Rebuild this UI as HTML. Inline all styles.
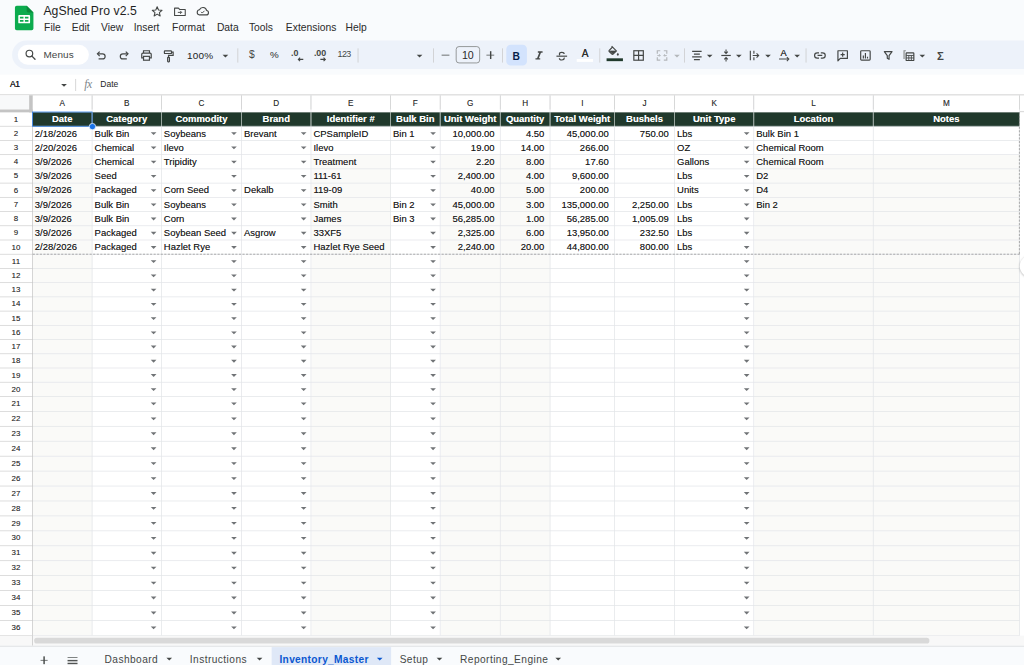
<!DOCTYPE html>
<html><head><meta charset="utf-8"><title>AgShed Pro v2.5 - Google Sheets</title>
<style>
html,body{margin:0;padding:0;overflow:hidden;}
body{position:relative;width:1024px;height:665px;overflow:hidden;background:#f9fbfd;font-family:"Liberation Sans",sans-serif;}
#root{position:absolute;left:0;top:0;width:1440px;height:935px;transform:scale(0.711111);transform-origin:0 0;overflow:hidden;background:#f9fbfd;}
.abs{position:absolute;}
.t{position:absolute;white-space:nowrap;color:#1f1f1f;}
.c20{width:20px;text-align:center;}
.menu{position:absolute;top:27.5px;font-size:14.5px;line-height:20px;color:#2a2a2a;white-space:nowrap;}
.ic{position:absolute;overflow:visible;}
.sep{position:absolute;top:68px;width:1px;height:20px;background:#c7c7c7;}
.car{position:absolute;width:0;height:0;border-left:4px solid transparent;border-right:4px solid transparent;border-top:4.5px solid #444746;}
.cell{position:absolute;font-size:13.333px;color:#1c1c1c;white-space:nowrap;overflow:hidden;box-sizing:border-box;padding:0 3px;height:19px;line-height:20.300px;text-shadow:0 0 0.7px rgba(28,28,28,0.55);}
.cell.r{text-align:right;padding-right:7.5px;}
.hd{position:absolute;font-size:13.333px;font-weight:bold;color:#fff;text-align:center;white-space:nowrap;overflow:hidden;height:19px;line-height:19.400px;text-shadow:0 0 0.7px rgba(255,255,255,0.6);}
.ch{position:absolute;top:135.200px;height:19px;line-height:20px;font-size:11.5px;color:#333;text-align:center;text-shadow:0 0 0.6px rgba(50,50,50,0.5);}
.rh{position:absolute;left:0;width:45px;font-size:11.2px;color:#333;text-align:center;text-shadow:0 0 0.6px rgba(50,50,50,0.5);}
.dd{position:absolute;width:0;height:0;border-left:4px solid transparent;border-right:4px solid transparent;border-top:4px solid #707376;}
.tab{position:absolute;top:920.300px;font-size:14.3px;color:#444746;white-space:nowrap;letter-spacing:0.6px;}
.hl{position:absolute;height:1px;}
.vl{position:absolute;width:1px;}
</style></head><body><div id="root">

<svg class="ic" style="left:21px;top:8px" width="26" height="34.500" viewBox="0 0 26 34.500">
<path d="M2.500 0H16.500L26 9.500V32A2.500 2.500 0 0 1 23.500 34.500H2.500A2.500 2.500 0 0 1 0 32V2.500A2.500 2.500 0 0 1 2.500 0Z" fill="#0cab4e"/>
<path d="M16.500 0L26 9.500H19A2.500 2.500 0 0 1 16.500 7Z" fill="#0a8a3c"/>
<path d="M6 13.200H20A1.300 1.300 0 0 1 21.300 14.500V23.500A1.300 1.300 0 0 1 20 24.800H6A1.300 1.300 0 0 1 4.700 23.500V14.500A1.300 1.300 0 0 1 6 13.200Z M7 15.500V17.900H12V15.500Z M14 15.500V17.900H19V15.500Z M7 20.100V22.500H12V20.100Z M14 20.100V22.500H19V20.100Z" fill="#fff" fill-rule="evenodd"/>
</svg>
<div class="t" style="left:61px;top:2.800px;font-size:17.2px;line-height:24px;letter-spacing:0.1px;color:#1f1f1f">AgShed Pro v2.5</div>
<svg class="ic" style="left:211px;top:5.600px" width="20" height="20" viewBox="0 0 24 24"><path d="M12 4.200l2.300 5.400 5.900.500-4.500 3.900 1.400 5.800L12 16.700l-5.100 3.100 1.400-5.800-4.500-3.900 5.900-.500z" fill="none" stroke="#444746" stroke-width="1.800" stroke-linejoin="round"/></svg>
<svg class="ic" style="left:243px;top:5.600px" width="20" height="20" viewBox="0 0 24 24"><path d="M3 6.500h6.500l2 2.200H21V19H3z" fill="none" stroke="#444746" stroke-width="1.800" stroke-linejoin="round"/><path d="M8.500 13.700h6M12.500 11.200l2.500 2.500-2.500 2.500" fill="none" stroke="#444746" stroke-width="1.600"/></svg>
<svg class="ic" style="left:274.500px;top:5.500px" width="20" height="20" viewBox="0 0 24 24"><path d="M6.500 18h11.500a3.800 3.800 0 0 0 .600-7.550A6.300 6.300 0 0 0 6.600 9.300 4.400 4.400 0 0 0 6.500 18z" fill="none" stroke="#444746" stroke-width="1.900" stroke-linejoin="round"/><path d="M9.300 12.800l2 2 3.800-3.800" fill="none" stroke="#444746" stroke-width="1.600"/></svg>
<div class="menu" style="left:62px">File</div>
<div class="menu" style="left:101px">Edit</div>
<div class="menu" style="left:142px">View</div>
<div class="menu" style="left:188px">Insert</div>
<div class="menu" style="left:242px">Format</div>
<div class="menu" style="left:305px">Data</div>
<div class="menu" style="left:350px">Tools</div>
<div class="menu" style="left:402px">Extensions</div>
<div class="menu" style="left:486px">Help</div>
<div class="abs" style="left:17px;top:57px;width:1440px;height:40px;background:#edf2fa;border-radius:20px 0 0 20px"></div>
<div class="abs" style="left:25px;top:63px;width:100px;height:28px;background:#fff;border-radius:14px"></div>
<svg class="ic" style="left:33px;top:66.500px" width="20" height="20" viewBox="0 0 24 24"><circle cx="10" cy="10" r="5.600" fill="none" stroke="#444746" stroke-width="2"/><path d="M14.300 14.300l5.200 5.200" stroke="#444746" stroke-width="2.200" stroke-linecap="round"/></svg>
<div class="t" style="left:61px;top:66.600px;font-size:14px;line-height:18px;color:#444746;letter-spacing:0.15px">Menus</div>
<svg class="ic" style="left:131.5px;top:67.2px" width="20" height="20" viewBox="0 0 24 24"><path d="M6.500 10.500h8.200a4.300 4.300 0 0 1 0 8.600H8" fill="none" stroke="#444746" stroke-width="2"/><path d="M9.800 6.800L6 10.500l3.800 3.700" fill="none" stroke="#444746" stroke-width="2"/></svg>
<svg class="ic" style="left:164.8px;top:67.2px" width="20" height="20" viewBox="0 0 24 24"><path d="M17.500 10.500H9.300a4.300 4.300 0 0 0 0 8.600H16" fill="none" stroke="#444746" stroke-width="2"/><path d="M14.200 6.800l3.800 3.700-3.800 3.700" fill="none" stroke="#444746" stroke-width="2"/></svg>
<svg class="ic" style="left:196.0px;top:68.0px" width="20" height="20" viewBox="0 0 24 24"><path d="M7 8V4h10v4M7 16H4V9.800A1.800 1.800 0 0 1 5.800 8h12.400A1.800 1.800 0 0 1 20 9.800V16h-3" fill="none" stroke="#444746" stroke-width="2"/><rect x="7" y="13.500" width="10" height="6.500" fill="none" stroke="#444746" stroke-width="2"/></svg>
<svg class="ic" style="left:227.0px;top:68.5px" width="20" height="20" viewBox="0 0 24 24"><rect x="5" y="3" width="12" height="4.500" rx="1" fill="none" stroke="#444746" stroke-width="2"/><path d="M17 5.200h2.800v5.300H12v3.500" fill="none" stroke="#444746" stroke-width="2"/><rect x="10.500" y="14" width="3" height="7.500" rx="0.800" fill="none" stroke="#444746" stroke-width="2"/></svg>
<div class="t" style="left:263px;top:69px;font-size:14px;line-height:18px;color:#222;letter-spacing:0.3px">100%</div>
<div class="car" style="left:313.1px;top:76.5px;border-top-color:#444746"></div>
<div class="sep" style="left:333.5px"></div>
<div class="t" style="left:334.1px;top:65.9px;width:40px;text-align:center;font-size:14.5px;line-height:20px;color:#444746;">$</div>
<div class="t" style="left:366.0px;top:66.6px;width:40px;text-align:center;font-size:13.8px;line-height:20px;color:#444746;color:#1f1f1f">%</div>
<div class="t" style="left:394.4px;top:64.5px;width:40px;text-align:center;font-size:12.5px;line-height:20px;color:#444746;font-weight:bold">.0</div>
<svg class="ic" style="left:417.7px;top:79.500px" width="9" height="7" viewBox="0 0 9 7"><path d="M8.500 3.500H1.500M4 1L1.500 3.500 4 6" fill="none" stroke="#444746" stroke-width="1.500"/></svg>
<div class="t" style="left:430.1px;top:64.5px;width:40px;text-align:center;font-size:12.5px;line-height:20px;color:#444746;font-weight:bold">.00</div>
<svg class="ic" style="left:450.3px;top:79.500px" width="9" height="7" viewBox="0 0 9 7"><path d="M0.500 3.500H7.500M5 1l2.500 2.500L5 6" fill="none" stroke="#444746" stroke-width="1.500"/></svg>
<div class="t" style="left:463.8px;top:66.3px;width:40px;text-align:center;font-size:12.5px;line-height:20px;color:#444746;letter-spacing:-0.9px">123</div>
<div class="sep" style="left:502.9px"></div>
<div class="car" style="left:585.9px;top:76.5px;border-top-color:#444746"></div>
<div class="sep" style="left:608.7px"></div>
<div class="abs" style="left:620.7px;top:76.500px;width:11px;height:1.800px;background:#3a3c3b"></div>
<div class="abs" style="left:641px;top:65px;width:33.500px;height:24px;border:1px solid #747775;border-radius:4.500px;box-sizing:border-box;font-size:15px;line-height:23px;color:#2a2a2a;text-align:center;letter-spacing:-0.3px">10</div>
<div class="abs" style="left:684.4px;top:76.500px;width:11px;height:1.800px;background:#444746"></div>
<div class="abs" style="left:689.0px;top:71.900px;width:1.800px;height:11px;background:#444746"></div>
<div class="sep" style="left:706.1px"></div>
<div class="abs" style="left:711.500px;top:62.500px;width:29px;height:29px;background:#d3e3fd;border-radius:6px"></div>
<div class="t" style="left:705.9px;top:68.5px;width:40px;text-align:center;font-size:14.5px;line-height:20px;color:#444746;font-weight:bold;color:#041e49">B</div>
<svg class="ic" style="left:748.0px;top:67.7px" width="20" height="20" viewBox="0 0 24 24"><path d="M10 5v2.500h2.300l-3.600 9H6V19h8v-2.500h-2.300l3.600-9H18V5z" fill="#444746"/></svg>
<svg class="ic" style="left:780.0px;top:68.5px" width="20" height="20" viewBox="0 0 24 24"><path d="M3 12h18" fill="none" stroke="#444746" stroke-width="2"/><path d="M16 8.500C16 6.500 14.300 5.500 12 5.500S8 6.600 8 8.300c0 .900.400 1.500 1 2M8 15.500c0 2 1.700 3 4 3s4-1.100 4-2.800c0-.500-.1-.900-.3-1.200" fill="none" stroke="#444746" stroke-width="2"/></svg>
<div class="t" style="left:802.9px;top:65.2px;width:40px;text-align:center;font-size:14.2px;line-height:20px;color:#444746;color:#2e302f;text-shadow:0 0 0.4px #444746">A</div>
<div class="abs" style="left:811.2px;top:82.500px;width:23px;height:4px;background:#ffffff"></div>
<div class="sep" style="left:842.5px"></div>
<svg class="ic" style="left:852.7px;top:62.3px" width="20" height="20" viewBox="0 0 24 24"><path d="M8.500 3.500l8 8-5.500 5.500a1.400 1.400 0 0 1-2 0L4.500 12.500a1.400 1.400 0 0 1 0-2L10.500 4.500" fill="none" stroke="#444746" stroke-width="2"/><path d="M5.200 11.500h10.600l-5.300 5.300z" fill="#444746" stroke="#444746" stroke-width="1"/><path d="M19 14.500s-1.800 2-1.800 3.200a1.800 1.800 0 0 0 3.600 0c0-1.200-1.800-3.200-1.800-3.200z" fill="#444746"/></svg>
<div class="abs" style="left:852.9px;top:82.300px;width:23px;height:4.200px;background:#20392c"></div>
<svg class="ic" style="left:887.5px;top:68.0px" width="20" height="20" viewBox="0 0 24 24"><rect x="4" y="4" width="16" height="16" fill="none" stroke="#444746" stroke-width="2"/><path d="M12 4v16M4 12h16" fill="none" stroke="#444746" stroke-width="2"/></svg>
<svg class="ic" style="left:920.9px;top:68.0px" width="20" height="20" viewBox="0 0 24 24"><path d="M9 4H4v5M15 4h5v5M9 20H4v-5M15 20h5v-5" fill="none" stroke="#b4b7ba" stroke-width="2"/><path d="M4 12h5M7 10l2 2-2 2M20 12h-5M17 10l-2 2 2 2" fill="none" stroke="#b4b7ba" stroke-width="1.600"/></svg>
<div class="car" style="left:948.0px;top:76.5px;border-top-color:#b4b7ba"></div>
<div class="sep" style="left:962.1px"></div>
<svg class="ic" style="left:969.8px;top:68.0px" width="20" height="20" viewBox="0 0 24 24"><path d="M4 5h16M7 9.700h10M4 14.300h16M7 19h10" fill="none" stroke="#444746" stroke-width="2"/></svg>
<div class="car" style="left:993.7px;top:76.5px;border-top-color:#444746"></div>
<svg class="ic" style="left:1011.3px;top:68.0px" width="20" height="20" viewBox="0 0 24 24"><path d="M4 12h16" fill="none" stroke="#444746" stroke-width="2"/><path d="M12 2v6M9 5.500l3 3 3-3M12 22v-6M9 18.500l3-3 3 3" fill="none" stroke="#444746" stroke-width="1.800"/></svg>
<div class="car" style="left:1034.9px;top:76.5px;border-top-color:#444746"></div>
<svg class="ic" style="left:1051.4px;top:68.0px" width="20" height="20" viewBox="0 0 24 24"><path d="M5 4v16" fill="none" stroke="#444746" stroke-width="1.900"/><path d="M11 4v5M11 15v5" fill="none" stroke="#444746" stroke-width="1.900"/><path d="M9 12h10M15.500 8.500L19 12l-3.500 3.500" fill="none" stroke="#444746" stroke-width="1.900"/></svg>
<div class="car" style="left:1076.0px;top:76.5px;border-top-color:#444746"></div>
<div class="t" style="left:1081.9px;top:64.8px;width:40px;text-align:center;font-size:13px;line-height:20px;color:#444746;color:#2e302f;text-shadow:0 0 0.4px #444746">A</div>
<svg class="ic" style="left:1095.2px;top:79.200px" width="16" height="8" viewBox="0 0 16 8"><path d="M0.500 4h13.500M11.500 1.200L14.300 4l-2.800 2.800" fill="none" stroke="#444746" stroke-width="1.500"/></svg>
<div class="car" style="left:1116.8px;top:76.5px;border-top-color:#444746"></div>
<div class="sep" style="left:1133.3px"></div>
<svg class="ic" style="left:1143.1px;top:68.0px" width="20" height="20" viewBox="0 0 24 24"><path d="M10.500 7.500H7.500a4.500 4.500 0 0 0 0 9h3M13.500 7.500h3a4.500 4.500 0 0 1 0 9h-3M8 12h8" fill="none" stroke="#444746" stroke-width="2"/></svg>
<svg class="ic" style="left:1174.8px;top:68.0px" width="20" height="20" viewBox="0 0 24 24"><path d="M4 4h16v13H8l-4 4z" fill="none" stroke="#444746" stroke-width="2" stroke-linejoin="round"/><path d="M12 7v7M8.500 10.500h7" fill="none" stroke="#444746" stroke-width="2"/></svg>
<svg class="ic" style="left:1207.1px;top:68.0px" width="20" height="20" viewBox="0 0 24 24"><rect x="4" y="4" width="16" height="16" rx="1.500" fill="none" stroke="#444746" stroke-width="2"/><path d="M8.500 17v-5M12 17V8M15.500 17v-3" fill="none" stroke="#444746" stroke-width="2"/></svg>
<svg class="ic" style="left:1238.8px;top:68.0px" width="20" height="20" viewBox="0 0 24 24"><path d="M5.500 5.500h13l-5 6.800V18.500l-3-1.800v-4.400z" fill="none" stroke="#444746" stroke-width="2" stroke-linejoin="round"/></svg>
<svg class="ic" style="left:1267.9px;top:68.0px" width="20" height="20" viewBox="0 0 24 24"><path d="M7 4H4v14" fill="none" stroke="#8a8d8c" stroke-width="2"/><rect x="7.500" y="7.500" width="13" height="13" rx="1" fill="none" stroke="#444746" stroke-width="2"/><path d="M7.500 12h13M7.500 16.200h13M12 12v8.500M16.300 12v8.500" fill="none" stroke="#444746" stroke-width="1.500"/></svg>
<div class="car" style="left:1293.3px;top:76.5px;border-top-color:#444746"></div>
<div class="t" style="left:1302.6px;top:68.5px;width:40px;text-align:center;font-size:16px;line-height:20px;color:#444746;font-weight:bold">Σ</div>
<div class="abs" style="left:0;top:104.800px;width:1440px;height:29px;background:#fff"></div>
<div class="t" style="left:14px;top:111px;font-size:12px;line-height:16px;color:#1f1f1f;letter-spacing:-0.4px;text-shadow:0 0 0.4px #1f1f1f">A1</div>
<div class="car" style="left:86.3px;top:117.5px;border-top-color:#444746"></div>
<div class="abs" style="left:106px;top:111px;width:1px;height:17px;background:#c7c7c7"></div>
<div class="t" style="left:118.500px;top:108.500px;font-size:16.500px;line-height:20px;color:#80868b;font-style:italic;font-family:'Liberation Serif',serif;letter-spacing:-0.8px">fx</div>
<div class="t" style="left:141px;top:111px;font-size:12px;line-height:16px;color:#1f1f1f">Date</div>
<div class="abs" style="left:0;top:133px;width:1440px;height:761.00px;background:#fff"></div>
<div class="abs" style="left:46.0px;top:218.00px;width:84.0px;height:20.05px;background:#fafaf8"></div>
<div class="abs" style="left:437.8px;top:218.00px;width:111.8px;height:20.05px;background:#fafaf8"></div>
<div class="abs" style="left:619.5px;top:218.00px;width:84.5px;height:20.05px;background:#fafaf8"></div>
<div class="abs" style="left:704.0px;top:218.00px;width:70.0px;height:20.05px;background:#fafaf8"></div>
<div class="abs" style="left:1060.5px;top:218.00px;width:168.0px;height:20.05px;background:#fafaf8"></div>
<div class="abs" style="left:1228.5px;top:218.00px;width:205.5px;height:20.05px;background:#fafaf8"></div>
<div class="abs" style="left:46.0px;top:238.00px;width:84.0px;height:20.05px;background:#fafaf8"></div>
<div class="abs" style="left:437.8px;top:238.00px;width:111.8px;height:20.05px;background:#fafaf8"></div>
<div class="abs" style="left:619.5px;top:238.00px;width:84.5px;height:20.05px;background:#fafaf8"></div>
<div class="abs" style="left:704.0px;top:238.00px;width:70.0px;height:20.05px;background:#fafaf8"></div>
<div class="abs" style="left:1060.5px;top:238.00px;width:168.0px;height:20.05px;background:#fafaf8"></div>
<div class="abs" style="left:1228.5px;top:238.00px;width:205.5px;height:20.05px;background:#fafaf8"></div>
<div class="abs" style="left:46.0px;top:258.00px;width:84.0px;height:20.05px;background:#fafaf8"></div>
<div class="abs" style="left:437.8px;top:258.00px;width:111.8px;height:20.05px;background:#fafaf8"></div>
<div class="abs" style="left:619.5px;top:258.00px;width:84.5px;height:20.05px;background:#fafaf8"></div>
<div class="abs" style="left:704.0px;top:258.00px;width:70.0px;height:20.05px;background:#fafaf8"></div>
<div class="abs" style="left:1060.5px;top:258.00px;width:168.0px;height:20.05px;background:#fafaf8"></div>
<div class="abs" style="left:1228.5px;top:258.00px;width:205.5px;height:20.05px;background:#fafaf8"></div>
<div class="abs" style="left:46.0px;top:278.00px;width:84.0px;height:20.05px;background:#fafaf8"></div>
<div class="abs" style="left:437.8px;top:278.00px;width:111.8px;height:20.05px;background:#fafaf8"></div>
<div class="abs" style="left:619.5px;top:278.00px;width:84.5px;height:20.05px;background:#fafaf8"></div>
<div class="abs" style="left:704.0px;top:278.00px;width:70.0px;height:20.05px;background:#fafaf8"></div>
<div class="abs" style="left:1060.5px;top:278.00px;width:168.0px;height:20.05px;background:#fafaf8"></div>
<div class="abs" style="left:1228.5px;top:278.00px;width:205.5px;height:20.05px;background:#fafaf8"></div>
<div class="abs" style="left:46.0px;top:298.00px;width:84.0px;height:20.05px;background:#fafaf8"></div>
<div class="abs" style="left:437.8px;top:298.00px;width:111.8px;height:20.05px;background:#fafaf8"></div>
<div class="abs" style="left:619.5px;top:298.00px;width:84.5px;height:20.05px;background:#fafaf8"></div>
<div class="abs" style="left:704.0px;top:298.00px;width:70.0px;height:20.05px;background:#fafaf8"></div>
<div class="abs" style="left:1060.5px;top:298.00px;width:168.0px;height:20.05px;background:#fafaf8"></div>
<div class="abs" style="left:1228.5px;top:298.00px;width:205.5px;height:20.05px;background:#fafaf8"></div>
<div class="abs" style="left:46.0px;top:318.00px;width:84.0px;height:20.05px;background:#fafaf8"></div>
<div class="abs" style="left:437.8px;top:318.00px;width:111.8px;height:20.05px;background:#fafaf8"></div>
<div class="abs" style="left:619.5px;top:318.00px;width:84.5px;height:20.05px;background:#fafaf8"></div>
<div class="abs" style="left:704.0px;top:318.00px;width:70.0px;height:20.05px;background:#fafaf8"></div>
<div class="abs" style="left:1060.5px;top:318.00px;width:168.0px;height:20.05px;background:#fafaf8"></div>
<div class="abs" style="left:1228.5px;top:318.00px;width:205.5px;height:20.05px;background:#fafaf8"></div>
<div class="abs" style="left:46.0px;top:338.00px;width:84.0px;height:20.05px;background:#fafaf8"></div>
<div class="abs" style="left:437.8px;top:338.00px;width:111.8px;height:20.05px;background:#fafaf8"></div>
<div class="abs" style="left:619.5px;top:338.00px;width:84.5px;height:20.05px;background:#fafaf8"></div>
<div class="abs" style="left:704.0px;top:338.00px;width:70.0px;height:20.05px;background:#fafaf8"></div>
<div class="abs" style="left:1060.5px;top:338.00px;width:168.0px;height:20.05px;background:#fafaf8"></div>
<div class="abs" style="left:1228.5px;top:338.00px;width:205.5px;height:20.05px;background:#fafaf8"></div>
<div class="abs" style="left:46.0px;top:358.00px;width:84.0px;height:20.05px;background:#fafaf8"></div>
<div class="abs" style="left:437.8px;top:358.00px;width:111.8px;height:20.05px;background:#fafaf8"></div>
<div class="abs" style="left:619.5px;top:358.00px;width:84.5px;height:20.05px;background:#fafaf8"></div>
<div class="abs" style="left:704.0px;top:358.00px;width:70.0px;height:20.05px;background:#fafaf8"></div>
<div class="abs" style="left:1060.5px;top:358.00px;width:168.0px;height:20.05px;background:#fafaf8"></div>
<div class="abs" style="left:1228.5px;top:358.00px;width:205.5px;height:20.05px;background:#fafaf8"></div>
<div class="abs" style="left:46.0px;top:378.00px;width:84.0px;height:20.05px;background:#fafaf8"></div>
<div class="abs" style="left:437.8px;top:378.00px;width:111.8px;height:20.05px;background:#fafaf8"></div>
<div class="abs" style="left:619.5px;top:378.00px;width:84.5px;height:20.05px;background:#fafaf8"></div>
<div class="abs" style="left:704.0px;top:378.00px;width:70.0px;height:20.05px;background:#fafaf8"></div>
<div class="abs" style="left:1060.5px;top:378.00px;width:168.0px;height:20.05px;background:#fafaf8"></div>
<div class="abs" style="left:1228.5px;top:378.00px;width:205.5px;height:20.05px;background:#fafaf8"></div>
<div class="abs" style="left:46.0px;top:398.00px;width:84.0px;height:20.05px;background:#fafaf8"></div>
<div class="abs" style="left:437.8px;top:398.00px;width:111.8px;height:20.05px;background:#fafaf8"></div>
<div class="abs" style="left:619.5px;top:398.00px;width:84.5px;height:20.05px;background:#fafaf8"></div>
<div class="abs" style="left:704.0px;top:398.00px;width:70.0px;height:20.05px;background:#fafaf8"></div>
<div class="abs" style="left:1060.5px;top:398.00px;width:168.0px;height:20.05px;background:#fafaf8"></div>
<div class="abs" style="left:1228.5px;top:398.00px;width:205.5px;height:20.05px;background:#fafaf8"></div>
<div class="abs" style="left:46.0px;top:418.00px;width:84.0px;height:20.05px;background:#fafaf8"></div>
<div class="abs" style="left:437.8px;top:418.00px;width:111.8px;height:20.05px;background:#fafaf8"></div>
<div class="abs" style="left:619.5px;top:418.00px;width:84.5px;height:20.05px;background:#fafaf8"></div>
<div class="abs" style="left:704.0px;top:418.00px;width:70.0px;height:20.05px;background:#fafaf8"></div>
<div class="abs" style="left:1060.5px;top:418.00px;width:168.0px;height:20.05px;background:#fafaf8"></div>
<div class="abs" style="left:1228.5px;top:418.00px;width:205.5px;height:20.05px;background:#fafaf8"></div>
<div class="abs" style="left:46.0px;top:438.00px;width:84.0px;height:20.05px;background:#fafaf8"></div>
<div class="abs" style="left:437.8px;top:438.00px;width:111.8px;height:20.05px;background:#fafaf8"></div>
<div class="abs" style="left:619.5px;top:438.00px;width:84.5px;height:20.05px;background:#fafaf8"></div>
<div class="abs" style="left:704.0px;top:438.00px;width:70.0px;height:20.05px;background:#fafaf8"></div>
<div class="abs" style="left:1060.5px;top:438.00px;width:168.0px;height:20.05px;background:#fafaf8"></div>
<div class="abs" style="left:1228.5px;top:438.00px;width:205.5px;height:20.05px;background:#fafaf8"></div>
<div class="abs" style="left:46.0px;top:458.00px;width:84.0px;height:20.05px;background:#fafaf8"></div>
<div class="abs" style="left:437.8px;top:458.00px;width:111.8px;height:20.05px;background:#fafaf8"></div>
<div class="abs" style="left:619.5px;top:458.00px;width:84.5px;height:20.05px;background:#fafaf8"></div>
<div class="abs" style="left:704.0px;top:458.00px;width:70.0px;height:20.05px;background:#fafaf8"></div>
<div class="abs" style="left:1060.5px;top:458.00px;width:168.0px;height:20.05px;background:#fafaf8"></div>
<div class="abs" style="left:1228.5px;top:458.00px;width:205.5px;height:20.05px;background:#fafaf8"></div>
<div class="abs" style="left:46.0px;top:478.00px;width:84.0px;height:20.05px;background:#fafaf8"></div>
<div class="abs" style="left:437.8px;top:478.00px;width:111.8px;height:20.05px;background:#fafaf8"></div>
<div class="abs" style="left:619.5px;top:478.00px;width:84.5px;height:20.05px;background:#fafaf8"></div>
<div class="abs" style="left:704.0px;top:478.00px;width:70.0px;height:20.05px;background:#fafaf8"></div>
<div class="abs" style="left:1060.5px;top:478.00px;width:168.0px;height:20.05px;background:#fafaf8"></div>
<div class="abs" style="left:1228.5px;top:478.00px;width:205.5px;height:20.05px;background:#fafaf8"></div>
<div class="abs" style="left:46.0px;top:498.00px;width:84.0px;height:20.05px;background:#fafaf8"></div>
<div class="abs" style="left:437.8px;top:498.00px;width:111.8px;height:20.05px;background:#fafaf8"></div>
<div class="abs" style="left:619.5px;top:498.00px;width:84.5px;height:20.05px;background:#fafaf8"></div>
<div class="abs" style="left:704.0px;top:498.00px;width:70.0px;height:20.05px;background:#fafaf8"></div>
<div class="abs" style="left:1060.5px;top:498.00px;width:168.0px;height:20.05px;background:#fafaf8"></div>
<div class="abs" style="left:1228.5px;top:498.00px;width:205.5px;height:20.05px;background:#fafaf8"></div>
<div class="abs" style="left:46.0px;top:518.00px;width:84.0px;height:20.05px;background:#fafaf8"></div>
<div class="abs" style="left:437.8px;top:518.00px;width:111.8px;height:20.05px;background:#fafaf8"></div>
<div class="abs" style="left:619.5px;top:518.00px;width:84.5px;height:20.05px;background:#fafaf8"></div>
<div class="abs" style="left:704.0px;top:518.00px;width:70.0px;height:20.05px;background:#fafaf8"></div>
<div class="abs" style="left:1060.5px;top:518.00px;width:168.0px;height:20.05px;background:#fafaf8"></div>
<div class="abs" style="left:1228.5px;top:518.00px;width:205.5px;height:20.05px;background:#fafaf8"></div>
<div class="abs" style="left:46.0px;top:538.00px;width:84.0px;height:20.05px;background:#fafaf8"></div>
<div class="abs" style="left:437.8px;top:538.00px;width:111.8px;height:20.05px;background:#fafaf8"></div>
<div class="abs" style="left:619.5px;top:538.00px;width:84.5px;height:20.05px;background:#fafaf8"></div>
<div class="abs" style="left:704.0px;top:538.00px;width:70.0px;height:20.05px;background:#fafaf8"></div>
<div class="abs" style="left:1060.5px;top:538.00px;width:168.0px;height:20.05px;background:#fafaf8"></div>
<div class="abs" style="left:1228.5px;top:538.00px;width:205.5px;height:20.05px;background:#fafaf8"></div>
<div class="abs" style="left:46.0px;top:558.00px;width:84.0px;height:21.05px;background:#fafaf8"></div>
<div class="abs" style="left:437.8px;top:558.00px;width:111.8px;height:21.05px;background:#fafaf8"></div>
<div class="abs" style="left:619.5px;top:558.00px;width:84.5px;height:21.05px;background:#fafaf8"></div>
<div class="abs" style="left:704.0px;top:558.00px;width:70.0px;height:21.05px;background:#fafaf8"></div>
<div class="abs" style="left:1060.5px;top:558.00px;width:168.0px;height:21.05px;background:#fafaf8"></div>
<div class="abs" style="left:1228.5px;top:558.00px;width:205.5px;height:21.05px;background:#fafaf8"></div>
<div class="abs" style="left:46.0px;top:579.00px;width:84.0px;height:21.05px;background:#fafaf8"></div>
<div class="abs" style="left:437.8px;top:579.00px;width:111.8px;height:21.05px;background:#fafaf8"></div>
<div class="abs" style="left:619.5px;top:579.00px;width:84.5px;height:21.05px;background:#fafaf8"></div>
<div class="abs" style="left:704.0px;top:579.00px;width:70.0px;height:21.05px;background:#fafaf8"></div>
<div class="abs" style="left:1060.5px;top:579.00px;width:168.0px;height:21.05px;background:#fafaf8"></div>
<div class="abs" style="left:1228.5px;top:579.00px;width:205.5px;height:21.05px;background:#fafaf8"></div>
<div class="abs" style="left:46.0px;top:600.00px;width:84.0px;height:21.05px;background:#fafaf8"></div>
<div class="abs" style="left:437.8px;top:600.00px;width:111.8px;height:21.05px;background:#fafaf8"></div>
<div class="abs" style="left:619.5px;top:600.00px;width:84.5px;height:21.05px;background:#fafaf8"></div>
<div class="abs" style="left:704.0px;top:600.00px;width:70.0px;height:21.05px;background:#fafaf8"></div>
<div class="abs" style="left:1060.5px;top:600.00px;width:168.0px;height:21.05px;background:#fafaf8"></div>
<div class="abs" style="left:1228.5px;top:600.00px;width:205.5px;height:21.05px;background:#fafaf8"></div>
<div class="abs" style="left:46.0px;top:621.00px;width:84.0px;height:21.05px;background:#fafaf8"></div>
<div class="abs" style="left:437.8px;top:621.00px;width:111.8px;height:21.05px;background:#fafaf8"></div>
<div class="abs" style="left:619.5px;top:621.00px;width:84.5px;height:21.05px;background:#fafaf8"></div>
<div class="abs" style="left:704.0px;top:621.00px;width:70.0px;height:21.05px;background:#fafaf8"></div>
<div class="abs" style="left:1060.5px;top:621.00px;width:168.0px;height:21.05px;background:#fafaf8"></div>
<div class="abs" style="left:1228.5px;top:621.00px;width:205.5px;height:21.05px;background:#fafaf8"></div>
<div class="abs" style="left:46.0px;top:642.00px;width:84.0px;height:21.05px;background:#fafaf8"></div>
<div class="abs" style="left:437.8px;top:642.00px;width:111.8px;height:21.05px;background:#fafaf8"></div>
<div class="abs" style="left:619.5px;top:642.00px;width:84.5px;height:21.05px;background:#fafaf8"></div>
<div class="abs" style="left:704.0px;top:642.00px;width:70.0px;height:21.05px;background:#fafaf8"></div>
<div class="abs" style="left:1060.5px;top:642.00px;width:168.0px;height:21.05px;background:#fafaf8"></div>
<div class="abs" style="left:1228.5px;top:642.00px;width:205.5px;height:21.05px;background:#fafaf8"></div>
<div class="abs" style="left:46.0px;top:663.00px;width:84.0px;height:21.05px;background:#fafaf8"></div>
<div class="abs" style="left:437.8px;top:663.00px;width:111.8px;height:21.05px;background:#fafaf8"></div>
<div class="abs" style="left:619.5px;top:663.00px;width:84.5px;height:21.05px;background:#fafaf8"></div>
<div class="abs" style="left:704.0px;top:663.00px;width:70.0px;height:21.05px;background:#fafaf8"></div>
<div class="abs" style="left:1060.5px;top:663.00px;width:168.0px;height:21.05px;background:#fafaf8"></div>
<div class="abs" style="left:1228.5px;top:663.00px;width:205.5px;height:21.05px;background:#fafaf8"></div>
<div class="abs" style="left:46.0px;top:684.00px;width:84.0px;height:21.05px;background:#fafaf8"></div>
<div class="abs" style="left:437.8px;top:684.00px;width:111.8px;height:21.05px;background:#fafaf8"></div>
<div class="abs" style="left:619.5px;top:684.00px;width:84.5px;height:21.05px;background:#fafaf8"></div>
<div class="abs" style="left:704.0px;top:684.00px;width:70.0px;height:21.05px;background:#fafaf8"></div>
<div class="abs" style="left:1060.5px;top:684.00px;width:168.0px;height:21.05px;background:#fafaf8"></div>
<div class="abs" style="left:1228.5px;top:684.00px;width:205.5px;height:21.05px;background:#fafaf8"></div>
<div class="abs" style="left:46.0px;top:705.00px;width:84.0px;height:21.05px;background:#fafaf8"></div>
<div class="abs" style="left:437.8px;top:705.00px;width:111.8px;height:21.05px;background:#fafaf8"></div>
<div class="abs" style="left:619.5px;top:705.00px;width:84.5px;height:21.05px;background:#fafaf8"></div>
<div class="abs" style="left:704.0px;top:705.00px;width:70.0px;height:21.05px;background:#fafaf8"></div>
<div class="abs" style="left:1060.5px;top:705.00px;width:168.0px;height:21.05px;background:#fafaf8"></div>
<div class="abs" style="left:1228.5px;top:705.00px;width:205.5px;height:21.05px;background:#fafaf8"></div>
<div class="abs" style="left:46.0px;top:726.00px;width:84.0px;height:21.05px;background:#fafaf8"></div>
<div class="abs" style="left:437.8px;top:726.00px;width:111.8px;height:21.05px;background:#fafaf8"></div>
<div class="abs" style="left:619.5px;top:726.00px;width:84.5px;height:21.05px;background:#fafaf8"></div>
<div class="abs" style="left:704.0px;top:726.00px;width:70.0px;height:21.05px;background:#fafaf8"></div>
<div class="abs" style="left:1060.5px;top:726.00px;width:168.0px;height:21.05px;background:#fafaf8"></div>
<div class="abs" style="left:1228.5px;top:726.00px;width:205.5px;height:21.05px;background:#fafaf8"></div>
<div class="abs" style="left:46.0px;top:747.00px;width:84.0px;height:21.05px;background:#fafaf8"></div>
<div class="abs" style="left:437.8px;top:747.00px;width:111.8px;height:21.05px;background:#fafaf8"></div>
<div class="abs" style="left:619.5px;top:747.00px;width:84.5px;height:21.05px;background:#fafaf8"></div>
<div class="abs" style="left:704.0px;top:747.00px;width:70.0px;height:21.05px;background:#fafaf8"></div>
<div class="abs" style="left:1060.5px;top:747.00px;width:168.0px;height:21.05px;background:#fafaf8"></div>
<div class="abs" style="left:1228.5px;top:747.00px;width:205.5px;height:21.05px;background:#fafaf8"></div>
<div class="abs" style="left:46.0px;top:768.00px;width:84.0px;height:21.05px;background:#fafaf8"></div>
<div class="abs" style="left:437.8px;top:768.00px;width:111.8px;height:21.05px;background:#fafaf8"></div>
<div class="abs" style="left:619.5px;top:768.00px;width:84.5px;height:21.05px;background:#fafaf8"></div>
<div class="abs" style="left:704.0px;top:768.00px;width:70.0px;height:21.05px;background:#fafaf8"></div>
<div class="abs" style="left:1060.5px;top:768.00px;width:168.0px;height:21.05px;background:#fafaf8"></div>
<div class="abs" style="left:1228.5px;top:768.00px;width:205.5px;height:21.05px;background:#fafaf8"></div>
<div class="abs" style="left:46.0px;top:789.00px;width:84.0px;height:21.05px;background:#fafaf8"></div>
<div class="abs" style="left:437.8px;top:789.00px;width:111.8px;height:21.05px;background:#fafaf8"></div>
<div class="abs" style="left:619.5px;top:789.00px;width:84.5px;height:21.05px;background:#fafaf8"></div>
<div class="abs" style="left:704.0px;top:789.00px;width:70.0px;height:21.05px;background:#fafaf8"></div>
<div class="abs" style="left:1060.5px;top:789.00px;width:168.0px;height:21.05px;background:#fafaf8"></div>
<div class="abs" style="left:1228.5px;top:789.00px;width:205.5px;height:21.05px;background:#fafaf8"></div>
<div class="abs" style="left:46.0px;top:810.00px;width:84.0px;height:21.05px;background:#fafaf8"></div>
<div class="abs" style="left:437.8px;top:810.00px;width:111.8px;height:21.05px;background:#fafaf8"></div>
<div class="abs" style="left:619.5px;top:810.00px;width:84.5px;height:21.05px;background:#fafaf8"></div>
<div class="abs" style="left:704.0px;top:810.00px;width:70.0px;height:21.05px;background:#fafaf8"></div>
<div class="abs" style="left:1060.5px;top:810.00px;width:168.0px;height:21.05px;background:#fafaf8"></div>
<div class="abs" style="left:1228.5px;top:810.00px;width:205.5px;height:21.05px;background:#fafaf8"></div>
<div class="abs" style="left:46.0px;top:831.00px;width:84.0px;height:21.05px;background:#fafaf8"></div>
<div class="abs" style="left:437.8px;top:831.00px;width:111.8px;height:21.05px;background:#fafaf8"></div>
<div class="abs" style="left:619.5px;top:831.00px;width:84.5px;height:21.05px;background:#fafaf8"></div>
<div class="abs" style="left:704.0px;top:831.00px;width:70.0px;height:21.05px;background:#fafaf8"></div>
<div class="abs" style="left:1060.5px;top:831.00px;width:168.0px;height:21.05px;background:#fafaf8"></div>
<div class="abs" style="left:1228.5px;top:831.00px;width:205.5px;height:21.05px;background:#fafaf8"></div>
<div class="abs" style="left:46.0px;top:852.00px;width:84.0px;height:21.05px;background:#fafaf8"></div>
<div class="abs" style="left:437.8px;top:852.00px;width:111.8px;height:21.05px;background:#fafaf8"></div>
<div class="abs" style="left:619.5px;top:852.00px;width:84.5px;height:21.05px;background:#fafaf8"></div>
<div class="abs" style="left:704.0px;top:852.00px;width:70.0px;height:21.05px;background:#fafaf8"></div>
<div class="abs" style="left:1060.5px;top:852.00px;width:168.0px;height:21.05px;background:#fafaf8"></div>
<div class="abs" style="left:1228.5px;top:852.00px;width:205.5px;height:21.05px;background:#fafaf8"></div>
<div class="abs" style="left:46.0px;top:873.00px;width:84.0px;height:21.05px;background:#fafaf8"></div>
<div class="abs" style="left:437.8px;top:873.00px;width:111.8px;height:21.05px;background:#fafaf8"></div>
<div class="abs" style="left:619.5px;top:873.00px;width:84.5px;height:21.05px;background:#fafaf8"></div>
<div class="abs" style="left:704.0px;top:873.00px;width:70.0px;height:21.05px;background:#fafaf8"></div>
<div class="abs" style="left:1060.5px;top:873.00px;width:168.0px;height:21.05px;background:#fafaf8"></div>
<div class="abs" style="left:1228.5px;top:873.00px;width:205.5px;height:21.05px;background:#fafaf8"></div>
<div class="abs" style="left:46px;top:158.00px;width:1388.0px;height:20.00px;background:#20392c"></div>
<svg class="ic" style="left:0;top:0" width="1440" height="935" viewBox="0 0 1440 935"><rect x="0.00" y="132.30" width="1440.00" height="2.00" fill="#e0e0e0"/><rect x="1434.00" y="156.00" width="6.00" height="1.80" fill="#dcdcdc"/><rect x="46.00" y="177.00" width="1388.00" height="1.00" fill="#e2e4e8"/><rect x="0.00" y="177.00" width="46.00" height="1.00" fill="#cfcfcf"/><rect x="46.00" y="197.00" width="1388.00" height="1.00" fill="#e2e4e8"/><rect x="0.00" y="197.00" width="46.00" height="1.00" fill="#cfcfcf"/><rect x="46.00" y="217.00" width="1388.00" height="1.00" fill="#e2e4e8"/><rect x="0.00" y="217.00" width="46.00" height="1.00" fill="#cfcfcf"/><rect x="46.00" y="237.00" width="1388.00" height="1.00" fill="#e2e4e8"/><rect x="0.00" y="237.00" width="46.00" height="1.00" fill="#cfcfcf"/><rect x="46.00" y="257.00" width="1388.00" height="1.00" fill="#e2e4e8"/><rect x="0.00" y="257.00" width="46.00" height="1.00" fill="#cfcfcf"/><rect x="46.00" y="277.00" width="1388.00" height="1.00" fill="#e2e4e8"/><rect x="0.00" y="277.00" width="46.00" height="1.00" fill="#cfcfcf"/><rect x="46.00" y="297.00" width="1388.00" height="1.00" fill="#e2e4e8"/><rect x="0.00" y="297.00" width="46.00" height="1.00" fill="#cfcfcf"/><rect x="46.00" y="317.00" width="1388.00" height="1.00" fill="#e2e4e8"/><rect x="0.00" y="317.00" width="46.00" height="1.00" fill="#cfcfcf"/><rect x="46.00" y="337.00" width="1388.00" height="1.00" fill="#e2e4e8"/><rect x="0.00" y="337.00" width="46.00" height="1.00" fill="#cfcfcf"/><rect x="46.00" y="357.00" width="1388.00" height="1.00" fill="#e2e4e8"/><rect x="0.00" y="357.00" width="46.00" height="1.00" fill="#cfcfcf"/><rect x="46.00" y="377.00" width="1388.00" height="1.00" fill="#e2e4e8"/><rect x="0.00" y="377.00" width="46.00" height="1.00" fill="#cfcfcf"/><rect x="46.00" y="397.00" width="1388.00" height="1.00" fill="#e2e4e8"/><rect x="0.00" y="397.00" width="46.00" height="1.00" fill="#cfcfcf"/><rect x="46.00" y="417.00" width="1388.00" height="1.00" fill="#e2e4e8"/><rect x="0.00" y="417.00" width="46.00" height="1.00" fill="#cfcfcf"/><rect x="46.00" y="437.00" width="1388.00" height="1.00" fill="#e2e4e8"/><rect x="0.00" y="437.00" width="46.00" height="1.00" fill="#cfcfcf"/><rect x="46.00" y="457.00" width="1388.00" height="1.00" fill="#e2e4e8"/><rect x="0.00" y="457.00" width="46.00" height="1.00" fill="#cfcfcf"/><rect x="46.00" y="477.00" width="1388.00" height="1.00" fill="#e2e4e8"/><rect x="0.00" y="477.00" width="46.00" height="1.00" fill="#cfcfcf"/><rect x="46.00" y="497.00" width="1388.00" height="1.00" fill="#e2e4e8"/><rect x="0.00" y="497.00" width="46.00" height="1.00" fill="#cfcfcf"/><rect x="46.00" y="517.00" width="1388.00" height="1.00" fill="#e2e4e8"/><rect x="0.00" y="517.00" width="46.00" height="1.00" fill="#cfcfcf"/><rect x="46.00" y="537.00" width="1388.00" height="1.00" fill="#e2e4e8"/><rect x="0.00" y="537.00" width="46.00" height="1.00" fill="#cfcfcf"/><rect x="46.00" y="557.00" width="1388.00" height="1.00" fill="#e2e4e8"/><rect x="0.00" y="557.00" width="46.00" height="1.00" fill="#cfcfcf"/><rect x="46.00" y="578.00" width="1388.00" height="1.00" fill="#e2e4e8"/><rect x="0.00" y="578.00" width="46.00" height="1.00" fill="#cfcfcf"/><rect x="46.00" y="599.00" width="1388.00" height="1.00" fill="#e2e4e8"/><rect x="0.00" y="599.00" width="46.00" height="1.00" fill="#cfcfcf"/><rect x="46.00" y="620.00" width="1388.00" height="1.00" fill="#e2e4e8"/><rect x="0.00" y="620.00" width="46.00" height="1.00" fill="#cfcfcf"/><rect x="46.00" y="641.00" width="1388.00" height="1.00" fill="#e2e4e8"/><rect x="0.00" y="641.00" width="46.00" height="1.00" fill="#cfcfcf"/><rect x="46.00" y="662.00" width="1388.00" height="1.00" fill="#e2e4e8"/><rect x="0.00" y="662.00" width="46.00" height="1.00" fill="#cfcfcf"/><rect x="46.00" y="683.00" width="1388.00" height="1.00" fill="#e2e4e8"/><rect x="0.00" y="683.00" width="46.00" height="1.00" fill="#cfcfcf"/><rect x="46.00" y="704.00" width="1388.00" height="1.00" fill="#e2e4e8"/><rect x="0.00" y="704.00" width="46.00" height="1.00" fill="#cfcfcf"/><rect x="46.00" y="725.00" width="1388.00" height="1.00" fill="#e2e4e8"/><rect x="0.00" y="725.00" width="46.00" height="1.00" fill="#cfcfcf"/><rect x="46.00" y="746.00" width="1388.00" height="1.00" fill="#e2e4e8"/><rect x="0.00" y="746.00" width="46.00" height="1.00" fill="#cfcfcf"/><rect x="46.00" y="767.00" width="1388.00" height="1.00" fill="#e2e4e8"/><rect x="0.00" y="767.00" width="46.00" height="1.00" fill="#cfcfcf"/><rect x="46.00" y="788.00" width="1388.00" height="1.00" fill="#e2e4e8"/><rect x="0.00" y="788.00" width="46.00" height="1.00" fill="#cfcfcf"/><rect x="46.00" y="809.00" width="1388.00" height="1.00" fill="#e2e4e8"/><rect x="0.00" y="809.00" width="46.00" height="1.00" fill="#cfcfcf"/><rect x="46.00" y="830.00" width="1388.00" height="1.00" fill="#e2e4e8"/><rect x="0.00" y="830.00" width="46.00" height="1.00" fill="#cfcfcf"/><rect x="46.00" y="851.00" width="1388.00" height="1.00" fill="#e2e4e8"/><rect x="0.00" y="851.00" width="46.00" height="1.00" fill="#cfcfcf"/><rect x="46.00" y="872.00" width="1388.00" height="1.00" fill="#e2e4e8"/><rect x="0.00" y="872.00" width="46.00" height="1.00" fill="#cfcfcf"/><rect x="46.00" y="893.00" width="1388.00" height="1.00" fill="#e2e4e8"/><rect x="0.00" y="893.00" width="46.00" height="1.00" fill="#cfcfcf"/><rect x="129.00" y="134.00" width="1.00" height="760.00" fill="#e2e4e8"/><rect x="129.00" y="134.00" width="1.00" height="20.00" fill="#cfcfcf"/><rect x="129.00" y="158.00" width="1.00" height="19.00" fill="#93a399"/><rect x="226.40" y="134.00" width="1.00" height="760.00" fill="#e2e4e8"/><rect x="226.40" y="134.00" width="1.00" height="20.00" fill="#cfcfcf"/><rect x="226.40" y="158.00" width="1.00" height="19.00" fill="#93a399"/><rect x="339.20" y="134.00" width="1.00" height="760.00" fill="#e2e4e8"/><rect x="339.20" y="134.00" width="1.00" height="20.00" fill="#cfcfcf"/><rect x="339.20" y="158.00" width="1.00" height="19.00" fill="#93a399"/><rect x="436.80" y="134.00" width="1.00" height="760.00" fill="#e2e4e8"/><rect x="436.80" y="134.00" width="1.00" height="20.00" fill="#cfcfcf"/><rect x="436.80" y="158.00" width="1.00" height="19.00" fill="#93a399"/><rect x="548.60" y="134.00" width="1.00" height="760.00" fill="#e2e4e8"/><rect x="548.60" y="134.00" width="1.00" height="20.00" fill="#cfcfcf"/><rect x="548.60" y="158.00" width="1.00" height="19.00" fill="#93a399"/><rect x="618.50" y="134.00" width="1.00" height="760.00" fill="#e2e4e8"/><rect x="618.50" y="134.00" width="1.00" height="20.00" fill="#cfcfcf"/><rect x="618.50" y="158.00" width="1.00" height="19.00" fill="#93a399"/><rect x="703.00" y="134.00" width="1.00" height="760.00" fill="#e2e4e8"/><rect x="703.00" y="134.00" width="1.00" height="20.00" fill="#cfcfcf"/><rect x="703.00" y="158.00" width="1.00" height="19.00" fill="#93a399"/><rect x="773.00" y="134.00" width="1.00" height="760.00" fill="#e2e4e8"/><rect x="773.00" y="134.00" width="1.00" height="20.00" fill="#cfcfcf"/><rect x="773.00" y="158.00" width="1.00" height="19.00" fill="#93a399"/><rect x="863.70" y="134.00" width="1.00" height="760.00" fill="#e2e4e8"/><rect x="863.70" y="134.00" width="1.00" height="20.00" fill="#cfcfcf"/><rect x="863.70" y="158.00" width="1.00" height="19.00" fill="#93a399"/><rect x="948.10" y="134.00" width="1.00" height="760.00" fill="#e2e4e8"/><rect x="948.10" y="134.00" width="1.00" height="20.00" fill="#cfcfcf"/><rect x="948.10" y="158.00" width="1.00" height="19.00" fill="#93a399"/><rect x="1059.50" y="134.00" width="1.00" height="760.00" fill="#e2e4e8"/><rect x="1059.50" y="134.00" width="1.00" height="20.00" fill="#cfcfcf"/><rect x="1059.50" y="158.00" width="1.00" height="19.00" fill="#93a399"/><rect x="1227.50" y="134.00" width="1.00" height="760.00" fill="#e2e4e8"/><rect x="1227.50" y="134.00" width="1.00" height="20.00" fill="#cfcfcf"/><rect x="1227.50" y="158.00" width="1.00" height="19.00" fill="#93a399"/><rect x="1433.00" y="134.00" width="1.00" height="760.00" fill="#e2e4e8"/><rect x="1433.00" y="134.00" width="1.00" height="20.00" fill="#cfcfcf"/><rect x="1433.00" y="158.00" width="1.00" height="19.00" fill="#93a399"/></svg>
<div class="abs" style="left:0;top:134px;width:41px;height:19.500px;background:#f8f9fa"></div>
<div class="abs" style="left:41px;top:134px;width:5px;height:23.50px;background:#c4c4c4"></div>
<div class="abs" style="left:0;top:153.500px;width:46px;height:4.00px;background:#c4c4c4"></div>
<div class="vl" style="left:45px;top:158.00px;height:752.00px;background:#c4c4c4"></div>
<div class="ch" style="left:46.0px;width:83.0px">A</div>
<div class="ch" style="left:130.0px;width:96.4px">B</div>
<div class="ch" style="left:227.4px;width:111.8px">C</div>
<div class="ch" style="left:340.2px;width:96.6px">D</div>
<div class="ch" style="left:437.8px;width:110.8px">E</div>
<div class="ch" style="left:549.6px;width:68.9px">F</div>
<div class="ch" style="left:619.5px;width:83.5px">G</div>
<div class="ch" style="left:704.0px;width:69.0px">H</div>
<div class="ch" style="left:774.0px;width:89.7px">I</div>
<div class="ch" style="left:864.7px;width:83.4px">J</div>
<div class="ch" style="left:949.1px;width:110.4px">K</div>
<div class="ch" style="left:1060.5px;width:167.0px">L</div>
<div class="ch" style="left:1228.5px;width:204.5px">M</div>
<div class="rh" style="top:158.00px;height:19.00px;line-height:18.20px">1</div>
<div class="rh" style="top:178.00px;height:19.00px;line-height:18.20px">2</div>
<div class="rh" style="top:198.00px;height:19.00px;line-height:18.20px">3</div>
<div class="rh" style="top:218.00px;height:19.00px;line-height:18.20px">4</div>
<div class="rh" style="top:238.00px;height:19.00px;line-height:18.20px">5</div>
<div class="rh" style="top:258.00px;height:19.00px;line-height:18.20px">6</div>
<div class="rh" style="top:278.00px;height:19.00px;line-height:18.20px">7</div>
<div class="rh" style="top:298.00px;height:19.00px;line-height:18.20px">8</div>
<div class="rh" style="top:318.00px;height:19.00px;line-height:18.20px">9</div>
<div class="rh" style="top:338.00px;height:19.00px;line-height:18.20px">10</div>
<div class="rh" style="top:358.00px;height:19.00px;line-height:18.20px">11</div>
<div class="rh" style="top:378.00px;height:19.00px;line-height:18.20px">12</div>
<div class="rh" style="top:398.00px;height:19.00px;line-height:18.20px">13</div>
<div class="rh" style="top:418.00px;height:19.00px;line-height:18.20px">14</div>
<div class="rh" style="top:438.00px;height:19.00px;line-height:18.20px">15</div>
<div class="rh" style="top:458.00px;height:19.00px;line-height:18.20px">16</div>
<div class="rh" style="top:478.00px;height:19.00px;line-height:18.20px">17</div>
<div class="rh" style="top:498.00px;height:19.00px;line-height:18.20px">18</div>
<div class="rh" style="top:518.00px;height:19.00px;line-height:18.20px">19</div>
<div class="rh" style="top:538.00px;height:19.00px;line-height:18.20px">20</div>
<div class="rh" style="top:558.00px;height:20.00px;line-height:18.60px">21</div>
<div class="rh" style="top:579.00px;height:20.00px;line-height:18.60px">22</div>
<div class="rh" style="top:600.00px;height:20.00px;line-height:18.60px">23</div>
<div class="rh" style="top:621.00px;height:20.00px;line-height:18.60px">24</div>
<div class="rh" style="top:642.00px;height:20.00px;line-height:18.60px">25</div>
<div class="rh" style="top:663.00px;height:20.00px;line-height:18.60px">26</div>
<div class="rh" style="top:684.00px;height:20.00px;line-height:18.60px">27</div>
<div class="rh" style="top:705.00px;height:20.00px;line-height:18.60px">28</div>
<div class="rh" style="top:726.00px;height:20.00px;line-height:18.60px">29</div>
<div class="rh" style="top:747.00px;height:20.00px;line-height:18.60px">30</div>
<div class="rh" style="top:768.00px;height:20.00px;line-height:18.60px">31</div>
<div class="rh" style="top:789.00px;height:20.00px;line-height:18.60px">32</div>
<div class="rh" style="top:810.00px;height:20.00px;line-height:18.60px">33</div>
<div class="rh" style="top:831.00px;height:20.00px;line-height:18.60px">34</div>
<div class="rh" style="top:852.00px;height:20.00px;line-height:18.60px">35</div>
<div class="rh" style="top:873.00px;height:20.00px;line-height:18.60px">36</div>
<div class="hd" style="left:46.0px;top:158.00px;width:83.0px">Date</div>
<div class="hd" style="left:130.0px;top:158.00px;width:96.4px">Category</div>
<div class="hd" style="left:227.4px;top:158.00px;width:111.8px">Commodity</div>
<div class="hd" style="left:340.2px;top:158.00px;width:96.6px">Brand</div>
<div class="hd" style="left:437.8px;top:158.00px;width:110.8px">Identifier #</div>
<div class="hd" style="left:549.6px;top:158.00px;width:68.9px">Bulk Bin</div>
<div class="hd" style="left:619.5px;top:158.00px;width:83.5px">Unit Weight</div>
<div class="hd" style="left:704.0px;top:158.00px;width:69.0px">Quantity</div>
<div class="hd" style="left:774.0px;top:158.00px;width:89.7px">Total Weight</div>
<div class="hd" style="left:864.7px;top:158.00px;width:83.4px">Bushels</div>
<div class="hd" style="left:949.1px;top:158.00px;width:110.4px">Unit Type</div>
<div class="hd" style="left:1060.5px;top:158.00px;width:167.0px">Location</div>
<div class="hd" style="left:1228.5px;top:158.00px;width:204.5px">Notes</div>
<div class="cell" style="left:46.0px;top:178.00px;width:83.0px">2/18/2026</div>
<div class="cell" style="left:130.0px;top:178.00px;width:96.4px">Bulk Bin</div>
<div class="cell" style="left:227.4px;top:178.00px;width:111.8px">Soybeans</div>
<div class="cell" style="left:340.2px;top:178.00px;width:96.6px">Brevant</div>
<div class="cell" style="left:437.8px;top:178.00px;width:110.8px">CPSampleID</div>
<div class="cell" style="left:549.6px;top:178.00px;width:68.9px">Bin 1</div>
<div class="cell r" style="left:619.5px;top:178.00px;width:83.5px">10,000.00</div>
<div class="cell r" style="left:704.0px;top:178.00px;width:69.0px">4.50</div>
<div class="cell r" style="left:774.0px;top:178.00px;width:89.7px">45,000.00</div>
<div class="cell r" style="left:864.7px;top:178.00px;width:83.4px">750.00</div>
<div class="cell" style="left:949.1px;top:178.00px;width:110.4px">Lbs</div>
<div class="cell" style="left:1060.5px;top:178.00px;width:167.0px">Bulk Bin 1</div>
<div class="cell" style="left:46.0px;top:198.00px;width:83.0px">2/20/2026</div>
<div class="cell" style="left:130.0px;top:198.00px;width:96.4px">Chemical</div>
<div class="cell" style="left:227.4px;top:198.00px;width:111.8px">Ilevo</div>
<div class="cell" style="left:437.8px;top:198.00px;width:110.8px">Ilevo</div>
<div class="cell r" style="left:619.5px;top:198.00px;width:83.5px">19.00</div>
<div class="cell r" style="left:704.0px;top:198.00px;width:69.0px">14.00</div>
<div class="cell r" style="left:774.0px;top:198.00px;width:89.7px">266.00</div>
<div class="cell" style="left:949.1px;top:198.00px;width:110.4px">OZ</div>
<div class="cell" style="left:1060.5px;top:198.00px;width:167.0px">Chemical Room</div>
<div class="cell" style="left:46.0px;top:218.00px;width:83.0px">3/9/2026</div>
<div class="cell" style="left:130.0px;top:218.00px;width:96.4px">Chemical</div>
<div class="cell" style="left:227.4px;top:218.00px;width:111.8px">Tripidity</div>
<div class="cell" style="left:437.8px;top:218.00px;width:110.8px">Treatment</div>
<div class="cell r" style="left:619.5px;top:218.00px;width:83.5px">2.20</div>
<div class="cell r" style="left:704.0px;top:218.00px;width:69.0px">8.00</div>
<div class="cell r" style="left:774.0px;top:218.00px;width:89.7px">17.60</div>
<div class="cell" style="left:949.1px;top:218.00px;width:110.4px">Gallons</div>
<div class="cell" style="left:1060.5px;top:218.00px;width:167.0px">Chemical Room</div>
<div class="cell" style="left:46.0px;top:238.00px;width:83.0px">3/9/2026</div>
<div class="cell" style="left:130.0px;top:238.00px;width:96.4px">Seed</div>
<div class="cell" style="left:437.8px;top:238.00px;width:110.8px">111-61</div>
<div class="cell r" style="left:619.5px;top:238.00px;width:83.5px">2,400.00</div>
<div class="cell r" style="left:704.0px;top:238.00px;width:69.0px">4.00</div>
<div class="cell r" style="left:774.0px;top:238.00px;width:89.7px">9,600.00</div>
<div class="cell" style="left:949.1px;top:238.00px;width:110.4px">Lbs</div>
<div class="cell" style="left:1060.5px;top:238.00px;width:167.0px">D2</div>
<div class="cell" style="left:46.0px;top:258.00px;width:83.0px">3/9/2026</div>
<div class="cell" style="left:130.0px;top:258.00px;width:96.4px">Packaged</div>
<div class="cell" style="left:227.4px;top:258.00px;width:111.8px">Corn Seed</div>
<div class="cell" style="left:340.2px;top:258.00px;width:96.6px">Dekalb</div>
<div class="cell" style="left:437.8px;top:258.00px;width:110.8px">119-09</div>
<div class="cell r" style="left:619.5px;top:258.00px;width:83.5px">40.00</div>
<div class="cell r" style="left:704.0px;top:258.00px;width:69.0px">5.00</div>
<div class="cell r" style="left:774.0px;top:258.00px;width:89.7px">200.00</div>
<div class="cell" style="left:949.1px;top:258.00px;width:110.4px">Units</div>
<div class="cell" style="left:1060.5px;top:258.00px;width:167.0px">D4</div>
<div class="cell" style="left:46.0px;top:278.00px;width:83.0px">3/9/2026</div>
<div class="cell" style="left:130.0px;top:278.00px;width:96.4px">Bulk Bin</div>
<div class="cell" style="left:227.4px;top:278.00px;width:111.8px">Soybeans</div>
<div class="cell" style="left:437.8px;top:278.00px;width:110.8px">Smith</div>
<div class="cell" style="left:549.6px;top:278.00px;width:68.9px">Bin 2</div>
<div class="cell r" style="left:619.5px;top:278.00px;width:83.5px">45,000.00</div>
<div class="cell r" style="left:704.0px;top:278.00px;width:69.0px">3.00</div>
<div class="cell r" style="left:774.0px;top:278.00px;width:89.7px">135,000.00</div>
<div class="cell r" style="left:864.7px;top:278.00px;width:83.4px">2,250.00</div>
<div class="cell" style="left:949.1px;top:278.00px;width:110.4px">Lbs</div>
<div class="cell" style="left:1060.5px;top:278.00px;width:167.0px">Bin 2</div>
<div class="cell" style="left:46.0px;top:298.00px;width:83.0px">3/9/2026</div>
<div class="cell" style="left:130.0px;top:298.00px;width:96.4px">Bulk Bin</div>
<div class="cell" style="left:227.4px;top:298.00px;width:111.8px">Corn</div>
<div class="cell" style="left:437.8px;top:298.00px;width:110.8px">James</div>
<div class="cell" style="left:549.6px;top:298.00px;width:68.9px">Bin 3</div>
<div class="cell r" style="left:619.5px;top:298.00px;width:83.5px">56,285.00</div>
<div class="cell r" style="left:704.0px;top:298.00px;width:69.0px">1.00</div>
<div class="cell r" style="left:774.0px;top:298.00px;width:89.7px">56,285.00</div>
<div class="cell r" style="left:864.7px;top:298.00px;width:83.4px">1,005.09</div>
<div class="cell" style="left:949.1px;top:298.00px;width:110.4px">Lbs</div>
<div class="cell" style="left:46.0px;top:318.00px;width:83.0px">3/9/2026</div>
<div class="cell" style="left:130.0px;top:318.00px;width:96.4px">Packaged</div>
<div class="cell" style="left:227.4px;top:318.00px;width:111.8px">Soybean Seed</div>
<div class="cell" style="left:340.2px;top:318.00px;width:96.6px">Asgrow</div>
<div class="cell" style="left:437.8px;top:318.00px;width:110.8px">33XF5</div>
<div class="cell r" style="left:619.5px;top:318.00px;width:83.5px">2,325.00</div>
<div class="cell r" style="left:704.0px;top:318.00px;width:69.0px">6.00</div>
<div class="cell r" style="left:774.0px;top:318.00px;width:89.7px">13,950.00</div>
<div class="cell r" style="left:864.7px;top:318.00px;width:83.4px">232.50</div>
<div class="cell" style="left:949.1px;top:318.00px;width:110.4px">Lbs</div>
<div class="cell" style="left:46.0px;top:338.00px;width:83.0px">2/28/2026</div>
<div class="cell" style="left:130.0px;top:338.00px;width:96.4px">Packaged</div>
<div class="cell" style="left:227.4px;top:338.00px;width:111.8px">Hazlet Rye</div>
<div class="cell" style="left:437.8px;top:338.00px;width:110.8px">Hazlet Rye Seed</div>
<div class="cell r" style="left:619.5px;top:338.00px;width:83.5px">2,240.00</div>
<div class="cell r" style="left:704.0px;top:338.00px;width:69.0px">20.00</div>
<div class="cell r" style="left:774.0px;top:338.00px;width:89.7px">44,800.00</div>
<div class="cell r" style="left:864.7px;top:338.00px;width:83.4px">800.00</div>
<div class="cell" style="left:949.1px;top:338.00px;width:110.4px">Lbs</div>
<div class="dd" style="left:212.4px;top:185.70px"></div>
<div class="dd" style="left:325.2px;top:185.70px"></div>
<div class="dd" style="left:422.8px;top:185.70px"></div>
<div class="dd" style="left:604.5px;top:185.70px"></div>
<div class="dd" style="left:1045.5px;top:185.70px"></div>
<div class="dd" style="left:212.4px;top:205.70px"></div>
<div class="dd" style="left:325.2px;top:205.70px"></div>
<div class="dd" style="left:422.8px;top:205.70px"></div>
<div class="dd" style="left:604.5px;top:205.70px"></div>
<div class="dd" style="left:1045.5px;top:205.70px"></div>
<div class="dd" style="left:212.4px;top:225.70px"></div>
<div class="dd" style="left:325.2px;top:225.70px"></div>
<div class="dd" style="left:422.8px;top:225.70px"></div>
<div class="dd" style="left:604.5px;top:225.70px"></div>
<div class="dd" style="left:1045.5px;top:225.70px"></div>
<div class="dd" style="left:212.4px;top:245.70px"></div>
<div class="dd" style="left:325.2px;top:245.70px"></div>
<div class="dd" style="left:422.8px;top:245.70px"></div>
<div class="dd" style="left:604.5px;top:245.70px"></div>
<div class="dd" style="left:1045.5px;top:245.70px"></div>
<div class="dd" style="left:212.4px;top:265.70px"></div>
<div class="dd" style="left:325.2px;top:265.70px"></div>
<div class="dd" style="left:422.8px;top:265.70px"></div>
<div class="dd" style="left:604.5px;top:265.70px"></div>
<div class="dd" style="left:1045.5px;top:265.70px"></div>
<div class="dd" style="left:212.4px;top:285.70px"></div>
<div class="dd" style="left:325.2px;top:285.70px"></div>
<div class="dd" style="left:422.8px;top:285.70px"></div>
<div class="dd" style="left:604.5px;top:285.70px"></div>
<div class="dd" style="left:1045.5px;top:285.70px"></div>
<div class="dd" style="left:212.4px;top:305.70px"></div>
<div class="dd" style="left:325.2px;top:305.70px"></div>
<div class="dd" style="left:422.8px;top:305.70px"></div>
<div class="dd" style="left:604.5px;top:305.70px"></div>
<div class="dd" style="left:1045.5px;top:305.70px"></div>
<div class="dd" style="left:212.4px;top:325.70px"></div>
<div class="dd" style="left:325.2px;top:325.70px"></div>
<div class="dd" style="left:422.8px;top:325.70px"></div>
<div class="dd" style="left:604.5px;top:325.70px"></div>
<div class="dd" style="left:1045.5px;top:325.70px"></div>
<div class="dd" style="left:212.4px;top:345.70px"></div>
<div class="dd" style="left:325.2px;top:345.70px"></div>
<div class="dd" style="left:422.8px;top:345.70px"></div>
<div class="dd" style="left:604.5px;top:345.70px"></div>
<div class="dd" style="left:1045.5px;top:345.70px"></div>
<div class="dd" style="left:212.4px;top:365.70px"></div>
<div class="dd" style="left:325.2px;top:365.70px"></div>
<div class="dd" style="left:422.8px;top:365.70px"></div>
<div class="dd" style="left:604.5px;top:365.70px"></div>
<div class="dd" style="left:1045.5px;top:365.70px"></div>
<div class="dd" style="left:212.4px;top:385.70px"></div>
<div class="dd" style="left:325.2px;top:385.70px"></div>
<div class="dd" style="left:422.8px;top:385.70px"></div>
<div class="dd" style="left:604.5px;top:385.70px"></div>
<div class="dd" style="left:1045.5px;top:385.70px"></div>
<div class="dd" style="left:212.4px;top:405.70px"></div>
<div class="dd" style="left:325.2px;top:405.70px"></div>
<div class="dd" style="left:422.8px;top:405.70px"></div>
<div class="dd" style="left:604.5px;top:405.70px"></div>
<div class="dd" style="left:1045.5px;top:405.70px"></div>
<div class="dd" style="left:212.4px;top:425.70px"></div>
<div class="dd" style="left:325.2px;top:425.70px"></div>
<div class="dd" style="left:422.8px;top:425.70px"></div>
<div class="dd" style="left:604.5px;top:425.70px"></div>
<div class="dd" style="left:1045.5px;top:425.70px"></div>
<div class="dd" style="left:212.4px;top:445.70px"></div>
<div class="dd" style="left:325.2px;top:445.70px"></div>
<div class="dd" style="left:422.8px;top:445.70px"></div>
<div class="dd" style="left:604.5px;top:445.70px"></div>
<div class="dd" style="left:1045.5px;top:445.70px"></div>
<div class="dd" style="left:212.4px;top:465.70px"></div>
<div class="dd" style="left:325.2px;top:465.70px"></div>
<div class="dd" style="left:422.8px;top:465.70px"></div>
<div class="dd" style="left:604.5px;top:465.70px"></div>
<div class="dd" style="left:1045.5px;top:465.70px"></div>
<div class="dd" style="left:212.4px;top:485.70px"></div>
<div class="dd" style="left:325.2px;top:485.70px"></div>
<div class="dd" style="left:422.8px;top:485.70px"></div>
<div class="dd" style="left:604.5px;top:485.70px"></div>
<div class="dd" style="left:1045.5px;top:485.70px"></div>
<div class="dd" style="left:212.4px;top:505.70px"></div>
<div class="dd" style="left:325.2px;top:505.70px"></div>
<div class="dd" style="left:422.8px;top:505.70px"></div>
<div class="dd" style="left:604.5px;top:505.70px"></div>
<div class="dd" style="left:1045.5px;top:505.70px"></div>
<div class="dd" style="left:212.4px;top:525.70px"></div>
<div class="dd" style="left:325.2px;top:525.70px"></div>
<div class="dd" style="left:422.8px;top:525.70px"></div>
<div class="dd" style="left:604.5px;top:525.70px"></div>
<div class="dd" style="left:1045.5px;top:525.70px"></div>
<div class="dd" style="left:212.4px;top:545.70px"></div>
<div class="dd" style="left:325.2px;top:545.70px"></div>
<div class="dd" style="left:422.8px;top:545.70px"></div>
<div class="dd" style="left:604.5px;top:545.70px"></div>
<div class="dd" style="left:1045.5px;top:545.70px"></div>
<div class="dd" style="left:212.4px;top:566.20px"></div>
<div class="dd" style="left:325.2px;top:566.20px"></div>
<div class="dd" style="left:422.8px;top:566.20px"></div>
<div class="dd" style="left:604.5px;top:566.20px"></div>
<div class="dd" style="left:1045.5px;top:566.20px"></div>
<div class="dd" style="left:212.4px;top:587.20px"></div>
<div class="dd" style="left:325.2px;top:587.20px"></div>
<div class="dd" style="left:422.8px;top:587.20px"></div>
<div class="dd" style="left:604.5px;top:587.20px"></div>
<div class="dd" style="left:1045.5px;top:587.20px"></div>
<div class="dd" style="left:212.4px;top:608.20px"></div>
<div class="dd" style="left:325.2px;top:608.20px"></div>
<div class="dd" style="left:422.8px;top:608.20px"></div>
<div class="dd" style="left:604.5px;top:608.20px"></div>
<div class="dd" style="left:1045.5px;top:608.20px"></div>
<div class="dd" style="left:212.4px;top:629.20px"></div>
<div class="dd" style="left:325.2px;top:629.20px"></div>
<div class="dd" style="left:422.8px;top:629.20px"></div>
<div class="dd" style="left:604.5px;top:629.20px"></div>
<div class="dd" style="left:1045.5px;top:629.20px"></div>
<div class="dd" style="left:212.4px;top:650.20px"></div>
<div class="dd" style="left:325.2px;top:650.20px"></div>
<div class="dd" style="left:422.8px;top:650.20px"></div>
<div class="dd" style="left:604.5px;top:650.20px"></div>
<div class="dd" style="left:1045.5px;top:650.20px"></div>
<div class="dd" style="left:212.4px;top:671.20px"></div>
<div class="dd" style="left:325.2px;top:671.20px"></div>
<div class="dd" style="left:422.8px;top:671.20px"></div>
<div class="dd" style="left:604.5px;top:671.20px"></div>
<div class="dd" style="left:1045.5px;top:671.20px"></div>
<div class="dd" style="left:212.4px;top:692.20px"></div>
<div class="dd" style="left:325.2px;top:692.20px"></div>
<div class="dd" style="left:422.8px;top:692.20px"></div>
<div class="dd" style="left:604.5px;top:692.20px"></div>
<div class="dd" style="left:1045.5px;top:692.20px"></div>
<div class="dd" style="left:212.4px;top:713.20px"></div>
<div class="dd" style="left:325.2px;top:713.20px"></div>
<div class="dd" style="left:422.8px;top:713.20px"></div>
<div class="dd" style="left:604.5px;top:713.20px"></div>
<div class="dd" style="left:1045.5px;top:713.20px"></div>
<div class="dd" style="left:212.4px;top:734.20px"></div>
<div class="dd" style="left:325.2px;top:734.20px"></div>
<div class="dd" style="left:422.8px;top:734.20px"></div>
<div class="dd" style="left:604.5px;top:734.20px"></div>
<div class="dd" style="left:1045.5px;top:734.20px"></div>
<div class="dd" style="left:212.4px;top:755.20px"></div>
<div class="dd" style="left:325.2px;top:755.20px"></div>
<div class="dd" style="left:422.8px;top:755.20px"></div>
<div class="dd" style="left:604.5px;top:755.20px"></div>
<div class="dd" style="left:1045.5px;top:755.20px"></div>
<div class="dd" style="left:212.4px;top:776.20px"></div>
<div class="dd" style="left:325.2px;top:776.20px"></div>
<div class="dd" style="left:422.8px;top:776.20px"></div>
<div class="dd" style="left:604.5px;top:776.20px"></div>
<div class="dd" style="left:1045.5px;top:776.20px"></div>
<div class="dd" style="left:212.4px;top:797.20px"></div>
<div class="dd" style="left:325.2px;top:797.20px"></div>
<div class="dd" style="left:422.8px;top:797.20px"></div>
<div class="dd" style="left:604.5px;top:797.20px"></div>
<div class="dd" style="left:1045.5px;top:797.20px"></div>
<div class="dd" style="left:212.4px;top:818.20px"></div>
<div class="dd" style="left:325.2px;top:818.20px"></div>
<div class="dd" style="left:422.8px;top:818.20px"></div>
<div class="dd" style="left:604.5px;top:818.20px"></div>
<div class="dd" style="left:1045.5px;top:818.20px"></div>
<div class="dd" style="left:212.4px;top:839.20px"></div>
<div class="dd" style="left:325.2px;top:839.20px"></div>
<div class="dd" style="left:422.8px;top:839.20px"></div>
<div class="dd" style="left:604.5px;top:839.20px"></div>
<div class="dd" style="left:1045.5px;top:839.20px"></div>
<div class="dd" style="left:212.4px;top:860.20px"></div>
<div class="dd" style="left:325.2px;top:860.20px"></div>
<div class="dd" style="left:422.8px;top:860.20px"></div>
<div class="dd" style="left:604.5px;top:860.20px"></div>
<div class="dd" style="left:1045.5px;top:860.20px"></div>
<div class="dd" style="left:212.4px;top:881.20px"></div>
<div class="dd" style="left:325.2px;top:881.20px"></div>
<div class="dd" style="left:422.8px;top:881.20px"></div>
<div class="dd" style="left:604.5px;top:881.20px"></div>
<div class="dd" style="left:1045.5px;top:881.20px"></div>
<div class="abs" style="left:46px;top:357.00px;width:1388.0px;height:0;border-top:1px dashed #8c8c8c"></div>
<div class="abs" style="left:1433.0px;top:158.00px;width:0;height:199.00px;border-left:1px dashed #8c8c8c"></div>
<div class="abs" style="left:45px;top:157.00px;width:85px;height:21.00px;border:1.600px solid #1a73e8;box-sizing:border-box"></div>
<div class="abs" style="left:124.7px;top:172.70px;width:8px;height:8px;border-radius:5px;background:#1a73e8;border:1px solid #fff"></div>
<div class="abs" style="left:0;top:894.00px;width:1440px;height:15px;background:#f8f8f8"></div>
<div class="vl" style="left:45px;top:894.00px;height:14px;background:#c4c4c4"></div>
<div class="abs" style="left:48px;top:897.30px;width:1259px;height:8px;border-radius:4px;background:#d9d9d9"></div>
<div class="hl" style="left:0;top:908.00px;width:1440px;height:1.500px;background:#e6e8ea"></div>
<div class="abs" style="left:1434.400px;top:359.300px;width:31px;height:31px;border-radius:16px;background:#fff;box-shadow:0 1px 3px rgba(0,0,0,0.300)"></div>
<div class="abs" style="left:0;top:909.50px;width:1440px;height:40px;background:#f9fbfd"></div>
<div class="abs" style="left:381.500px;top:909.50px;width:168px;height:40px;background:#dfe8f7"></div>
<div class="abs" style="left:56.650px;top:927.600px;width:10.500px;height:1.700px;background:#444746"></div><div class="abs" style="left:61.050px;top:923.200px;width:1.700px;height:10.500px;background:#444746"></div>
<div class="abs" style="left:94.800px;top:923.8px;width:14.500px;height:1.700px;background:#505352"></div>
<div class="abs" style="left:94.800px;top:927.9px;width:14.500px;height:1.700px;background:#505352"></div>
<div class="abs" style="left:94.800px;top:932.0px;width:14.500px;height:1.700px;background:#505352"></div>
<div class="tab" style="left:147px;">Dashboard</div>
<div class="car" style="left:234px;top:925.3px;border-top-color:#444746"></div>
<div class="tab" style="left:267px;">Instructions</div>
<div class="car" style="left:361px;top:925.3px;border-top-color:#444746"></div>
<div class="tab" style="left:393px;color:#0b57d0;font-weight:bold;letter-spacing:0.45px;">Inventory_Master</div>
<div class="car" style="left:530px;top:925.3px;border-top-color:#0b57d0"></div>
<div class="tab" style="left:562px;">Setup</div>
<div class="car" style="left:614px;top:925.3px;border-top-color:#444746"></div>
<div class="tab" style="left:647px;">Reporting_Engine</div>
<div class="car" style="left:781px;top:925.3px;border-top-color:#444746"></div>
</div></body></html>
